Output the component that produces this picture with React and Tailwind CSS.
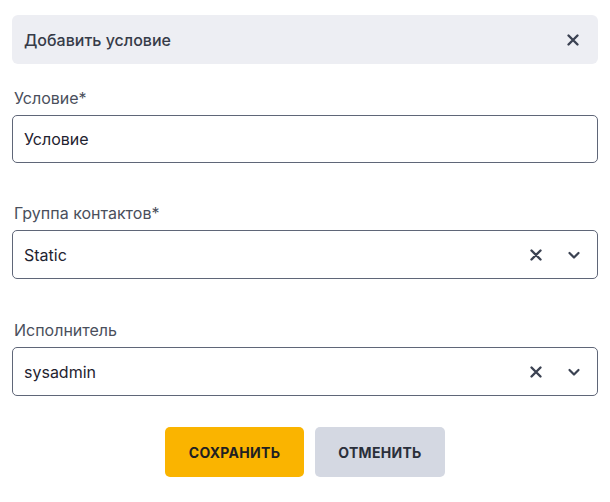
import React, { useState } from "react";

const XIcon = ({ size = 14 }) => (
	<svg width={size} height={size} viewBox="0 0 14 14" fill="none">
		<path d="M2.5 2.5l9 9M11.5 2.5l-9 9" stroke="#3b4252" strokeWidth="2.4" strokeLinecap="round" />
	</svg>
);

const Chevron = () => (
	<svg width="14" height="14" viewBox="0 0 14 14" fill="none">
		<path d="M2.5 5l4.5 4.5L11.5 5" stroke="#3b4252" strokeWidth="2.2" strokeLinecap="round" strokeLinejoin="round" />
	</svg>
);

const Field = ({ label, className = "", children }) => (
	<div className={"flex flex-col " + className}>
		<label className="text-[16px] text-[#4a4f5c] leading-5 mb-[7px] pl-[2px]">{label}</label>
		{children}
	</div>
);

const SelectBox = ({ value }) => (
	<div className="h-[49px] border border-[#5f6678] rounded-[5px] flex items-center pl-[11px] pr-[16px] bg-white">
		<span className="flex-1 text-[16px] text-[#1f2330]">{value}</span>
		<button className="mr-[24px] flex items-center">
			<XIcon />
		</button>
		<span className="flex items-center">
			<Chevron />
		</span>
	</div>
);

const App = () => {
	const [condition, setCondition] = useState("Условие");

	return (
		<div className="w-[610px] h-[502px] bg-white px-[12px] pt-[15px]" style={{ fontFamily: "Inter, 'Noto Sans', sans-serif" }}>
			<div className="h-[49px] bg-[#edeef3] rounded-[6px] flex items-center justify-between pl-[12px] pr-[18px]">
				<span className="text-[16px] font-medium text-[#363b48]">Добавить условие</span>
				<button className="flex items-center">
					<XIcon />
				</button>
			</div>

			<div className="mt-[24px] flex flex-col">
				<Field label="Условие*">
					<input
						className="h-[48px] w-full border border-[#5f6678] rounded-[5px] px-[11px] text-[16px] text-[#1f2330] outline-none"
						value={condition}
						onChange={(e) => setCondition(e.target.value)}
					/>
				</Field>
				<Field label="Группа контактов*" className="mt-[40px]">
					<SelectBox value="Static" />
				</Field>
				<Field label="Исполнитель" className="mt-[41px]">
					<SelectBox value="sysadmin" />
				</Field>
			</div>

			<div className="flex justify-center gap-[11px] mt-[31px]">
				<button className="w-[139px] h-[50px] bg-[#fab400] rounded-[5px] text-[14px] font-bold text-[#1f1f22] uppercase tracking-[0.3px]">
					Сохранить
				</button>
				<button className="w-[130px] h-[50px] bg-[#d4d8e2] rounded-[5px] text-[14px] font-bold text-[#2a2f3a] uppercase tracking-[0.3px]">
					Отменить
				</button>
			</div>
		</div>
	);
};

export default App;
